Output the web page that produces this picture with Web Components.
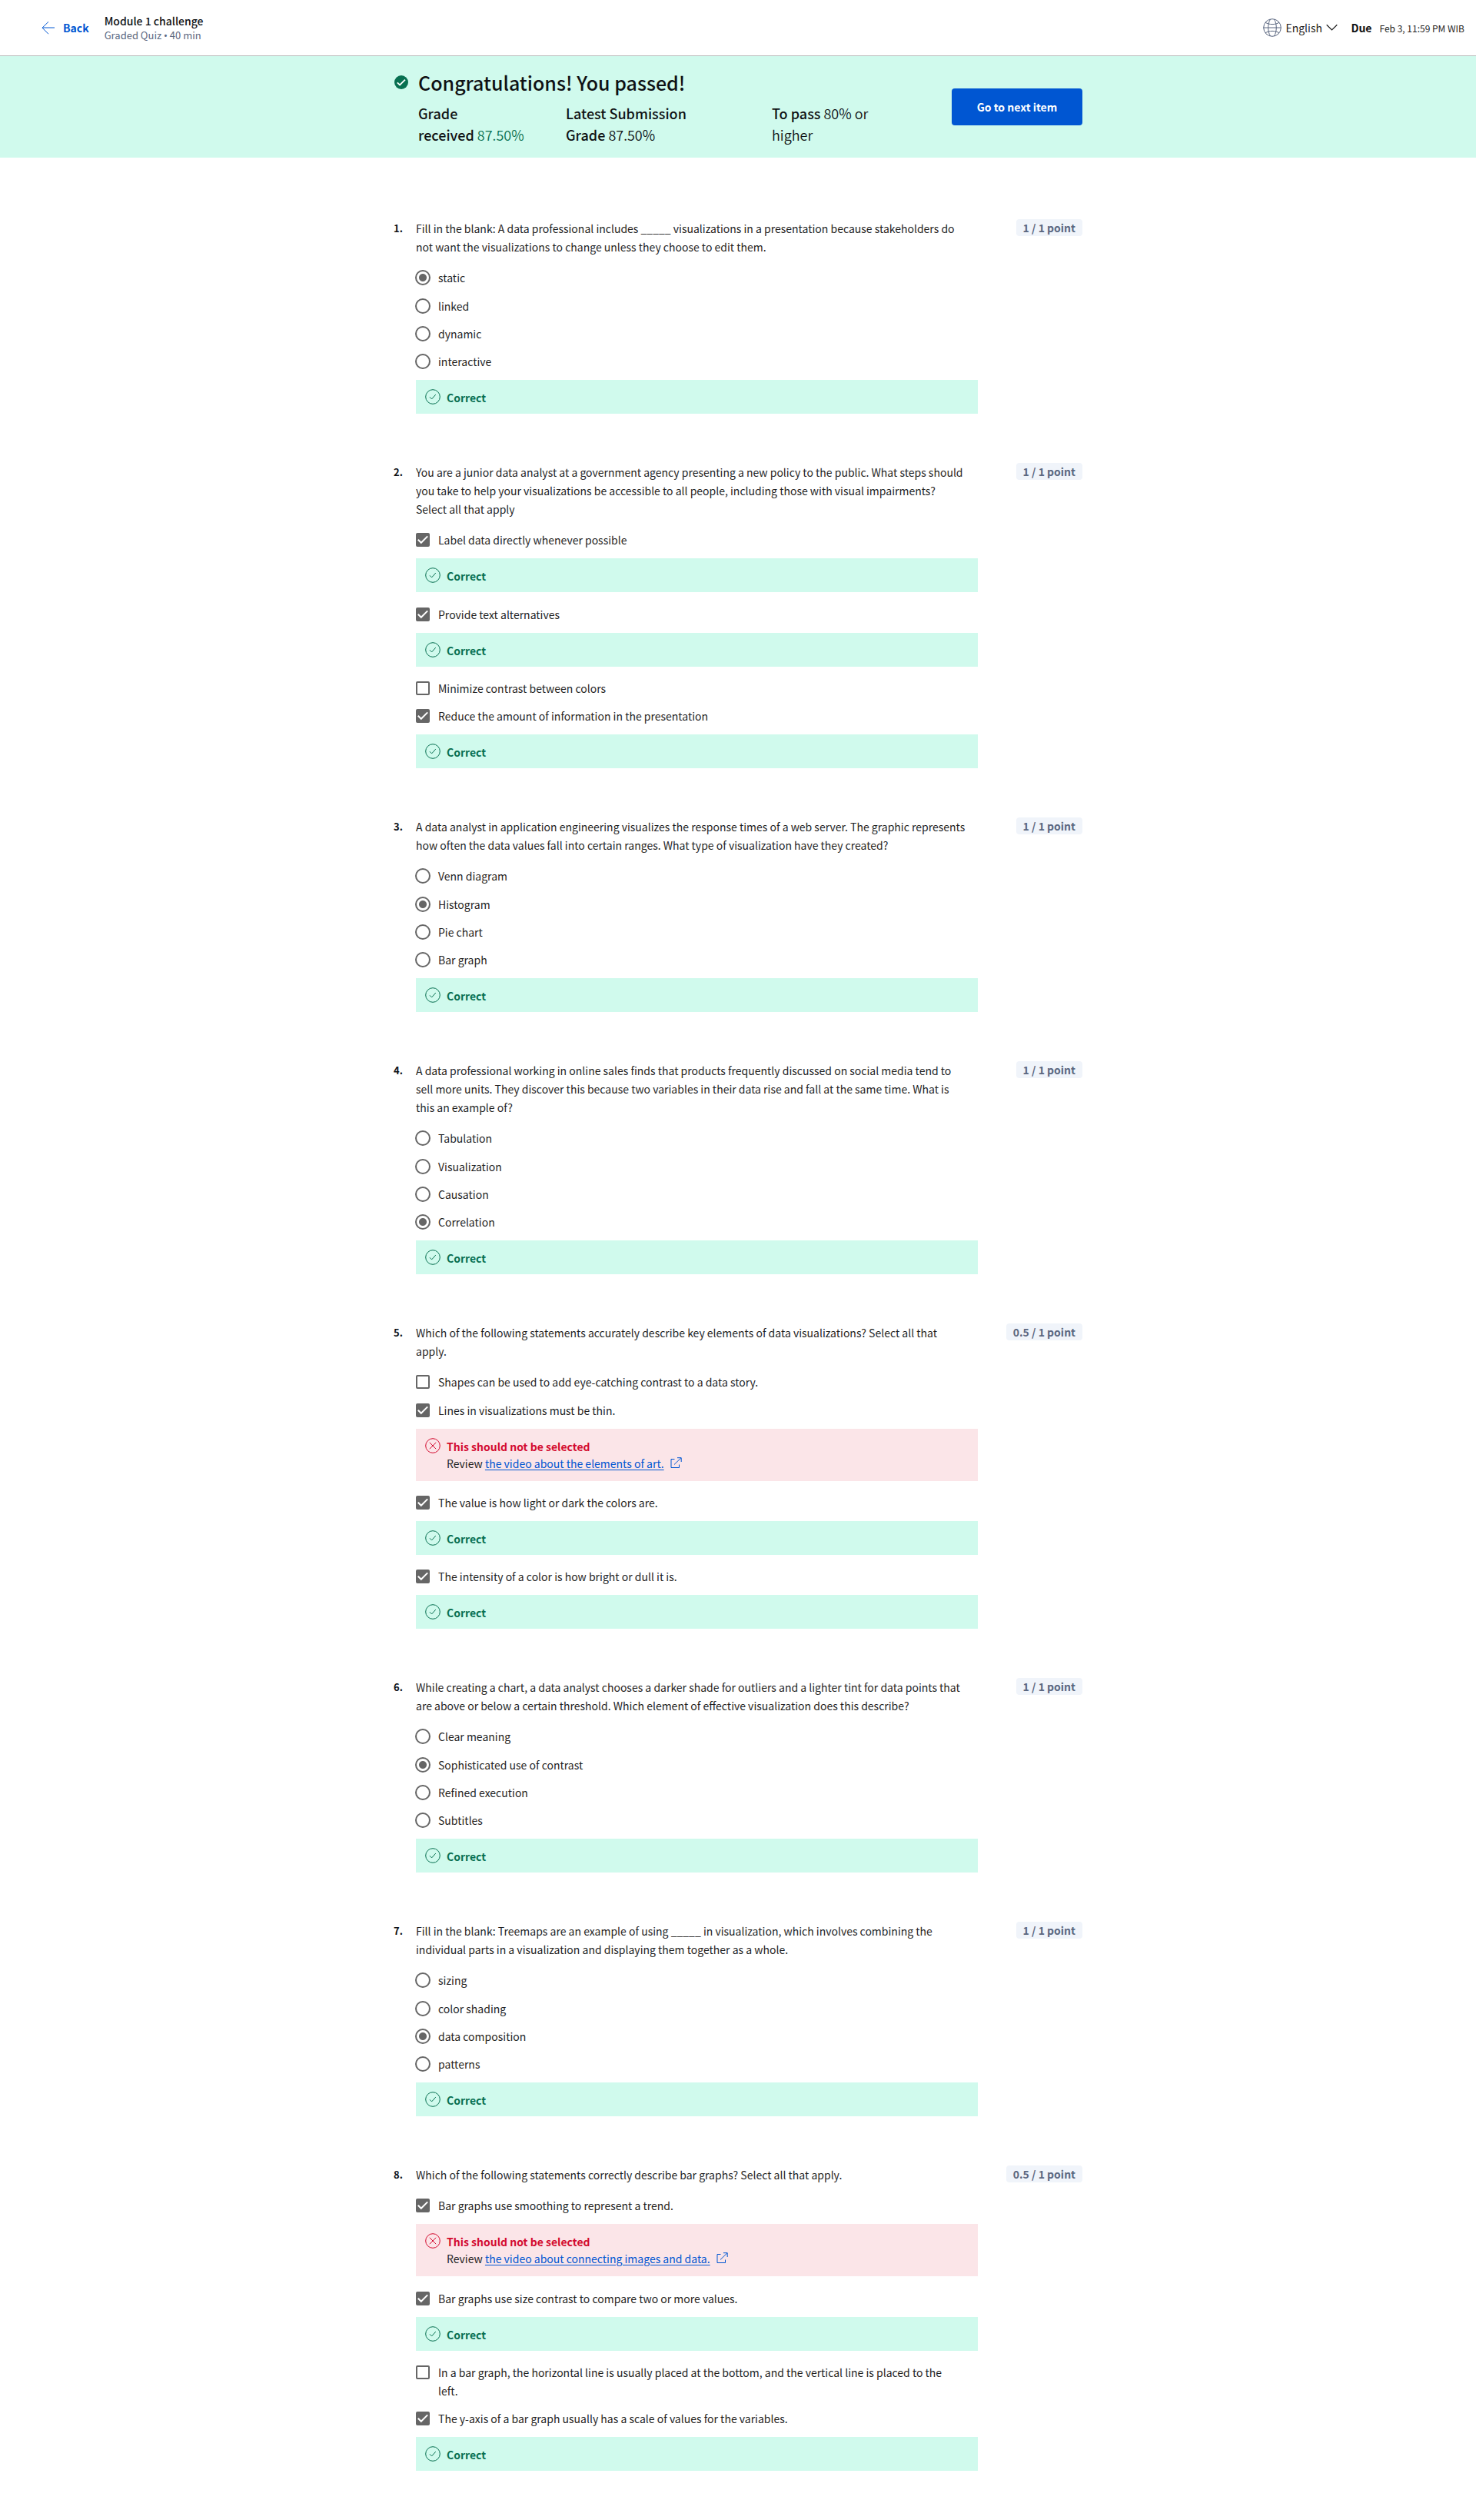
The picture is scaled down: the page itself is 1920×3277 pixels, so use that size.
<!DOCTYPE html>
<html lang="en">
<head>
<meta charset="utf-8">
<title>Module 1 challenge</title>
<style>
  body {
    margin: 0;
    background: #fff;
    color: #1f1f1f;
    font: 14px/24px "Noto Sans CJK SC", "Noto Sans", sans-serif;
  }
  .dot { font-family: "Noto Sans", sans-serif; }
</style>
</head>
<body>
<course-header>
  <span slot="title">Module 1 challenge</span>
  <span slot="meta">Graded Quiz <span class="dot">•</span> 40 min</span>
  <span slot="due">Feb 3, 11:59 PM WIB</span>
</course-header>
<result-banner>
  <span slot="heading">Congratulations! You passed!</span>
</result-banner>
<quiz-list></quiz-list>

<script>
const define = (name, html, setup) => {
  const template = document.createElement('template');
  template.innerHTML = html;
  customElements.define(name, class extends HTMLElement {
    connectedCallback() {
      if (this.shadowRoot) return;
      this.attachShadow({ mode: 'open' }).append(template.content.cloneNode(true));
      if (setup) setup(this, this.shadowRoot);
    }
  });
};

define('course-header', `
  <style>
    :host { display: block; border-bottom: 1px solid #bbb; }
    header { display: flex; align-items: center; height: 72px; padding: 0 15px 0 53px; }
    a { display: flex; align-items: center; gap: 10px; color: #0056d2; font-weight: 700; text-decoration: none; }
    svg { display: block; flex: none; fill: none; }
    .titles { flex: 1; margin-left: 20px; }
    h1 { margin: 0; font-size: 14px; line-height: 20px; font-weight: 500; color: #0f1114; }
    p { margin: 0; font-size: 13px; line-height: 18px; color: #5b6780; }
    .lang { display: flex; align-items: center; gap: 5px; }
    select { appearance: none; border: 0; margin: 0; padding: 0 20px 0 0; background: none; color: inherit; font: inherit; line-height: 24px; }
    .chevron { margin-left: -20px; pointer-events: none; }
    .due { display: flex; align-items: baseline; gap: 10px; margin-left: 17px; }
    .due b { font-weight: 700; color: #0f1114; }
    .due span { font-size: 12px; }
  </style>
  <header>
    <a href="#"><svg width="19" height="18" viewBox="0 0 19 18" stroke="#0056d2"><path d="M10 1.3 2 9.2l8 8M2 9h16"/></svg>Back</a>
    <div class="titles"><h1><slot name="title"></slot></h1><p><slot name="meta"></slot></p></div>
    <div class="lang">
      <svg width="24" height="24" viewBox="0 0 24 24" stroke="#5b6780"><circle cx="12" cy="12" r="11.3"/><path d="M.7 12h22.6M3 5.2c5 3.2 13 3.2 18 0M3 18.8c5-3.2 13-3.2 18 0M9.500 1C5.800 7 5.800 17 9.500 23M14.500 1c3.700 6 3.700 16 0 22"/></svg>
      <select aria-label="Language"><option>English</option></select>
      <svg class="chevron" width="15" height="10" viewBox="0 0 15 10" stroke="#1f1f1f" stroke-width="1.2"><path d="M.7 1.300 7.500 8l6.800-6.700"/></svg>
    </div>
    <div class="due"><b>Due</b><span><slot name="due"></slot></span></div>
  </header>`);

define('result-banner', `
  <style>
    :host { display: block; background: #d0faed; color: #0f1114; }
    section { box-sizing: border-box; max-width: 896px; margin: 0 auto; padding: 16px 0; display: grid; grid-template-columns: 32px 1fr 170px; align-items: center; }
    .icon { align-self: start; margin-top: 8px; }
    svg { display: block; }
    h2 { margin: 0; font-size: 25px; line-height: 36px; font-weight: 500; }
    .grades { display: grid; grid-template-columns: 168px 244px 140px; column-gap: 24px; margin-top: 8px; font-size: 18px; line-height: 28px; font-weight: 350; }
    p { margin: 0; }
    b { font-weight: 500; }
    .pass { color: #087051; }
    button { height: 48px; border: 0; border-radius: 4px; background: #0056d2; color: #fff; font: inherit; font-weight: 700; width: 100%; }
  </style>
  <section>
    <div class="icon"><svg width="20" height="20" viewBox="0 0 20 20" fill="none"><circle cx="10" cy="10" r="9" fill="#087051"/><path d="m4.800 10.300 3.300 3.200 6.900-6.800" stroke="#fff" stroke-width="1.800"/></svg></div>
    <div>
      <h2><slot name="heading"></slot></h2>
      <div class="grades">
        <p><b>Grade received</b>&nbsp;<span class="pass">87.50%</span></p>
        <p><b>Latest Submission Grade</b>&nbsp;<span>87.50%</span></p>
        <p><b>To pass</b> 80% or higher</p>
      </div>
    </div>
    <button type="button">Go to next item</button>
  </section>`);

define('points-badge', `
  <style>
    :host { display: block; padding: 0 9px; border-radius: 4px; background: #f0f4fa; color: #5b6780; font-weight: 700; line-height: 22px; white-space: nowrap; }
  </style><slot></slot>`);

define('answer-feedback', `
  <style>
    :host { display: block; margin-bottom: 16px; background: #d0faed; color: #087051; }
    :host([kind="wrong"]) { background: #fbe5e8; color: #d30b2f; }
    div { display: flex; gap: 8px; padding: 12px 12px 10px; line-height: 22px; }
    :host([kind="wrong"]) div { padding-bottom: 12px; }
    svg { display: block; flex: none; fill: none; stroke: currentColor; }
    section { line-height: 22px; }
    b { display: block; font-weight: 700; }
    .x, :host([kind="wrong"]) .ok { display: none; }
    :host([kind="wrong"]) .x { display: block; }
  </style>
  <div>
    <svg width="20" height="20" viewBox="0 0 20 20"><circle cx="10" cy="10" r="9.300"/><path class="ok" d="m6 10.300 2.600 2.600 5.200-5.800"/><path class="x" d="m5.800 5.800 8.400 8.400m0-8.400-8.400 8.400"/></svg>
    <section><b></b><slot></slot></section>
  </div>`, (host, root) => {
  root.querySelector('b').textContent = host.getAttribute('kind') === 'wrong' ? 'This should not be selected' : 'Correct';
});

define('review-link', `
  <style>
    :host { display: block; color: #1f1f1f; }
    a { color: #0056d2; text-underline-offset: 2px; }
    svg { display: inline-block; vertical-align: -1px; margin-left: 8px; fill: none; stroke: #0056d2; }
  </style>Review <a href="#"><slot></slot></a><svg width="15" height="15" viewBox="0 0 15 15"><path d="M5.500 2.500H1v11h10.500V9.500M5 9.500 14 .8M9 .700h5.200V6"/></svg>`);

define('quiz-question', `
  <style>
    :host { display: grid; grid-template-columns: 29px minmax(0, 1fr) 136px; align-items: start; }
    .number { font-size: 13px; font-weight: 700; color: #0f1114; }
    .prompt { margin: 0 0 16px; padding-right: 14px; }
    ul { margin: 0; padding: 0; list-style: none; }
    li:first-child { padding-bottom: 1px; }
    li:last-child answer-feedback { margin-bottom: 0; }
    label { display: grid; grid-template-columns: 20px 1fr; column-gap: 10px; margin: 0 0 12px -1px; padding-right: 24px; }
    .box { display: grid; width: 20px; height: 24px; place-items: center; }
    .box > * { grid-area: 1 / 1; }
    input { appearance: none; box-sizing: border-box; margin: 0; border: 2px solid #666; background: #fff; }
    input[type="radio"] { width: 20px; height: 20px; border-radius: 50%; }
    input[type="radio"]:checked { background: radial-gradient(circle, #666 4.500px, #fff 5.500px); }
    input[type="checkbox"] { width: 18px; height: 18px; border-radius: 2px; }
    input[type="checkbox"]:checked { background: #666; }
    svg { z-index: 1; fill: none; stroke: #fff; stroke-width: 2; pointer-events: none; }
    input:not(:checked) + svg { display: none; }
    points-badge { justify-self: end; }
  </style>
  <div class="number"></div>
  <div role="group" aria-labelledby="prompt"><p class="prompt" id="prompt"></p><ul></ul></div>
  <points-badge></points-badge>`);

// Option marks: "*" chosen, "+" chosen with "Correct" below, "!" chosen but wrong; "=" shows "Correct" below an option that is not chosen.
const questions = [
  ['radio', '1 / 1 point', 'Fill in the blank: A data professional includes _____ visualizations in a presentation because stakeholders do not want the visualizations to change unless they choose to edit them.',
    ['*', 'static'], ['', 'linked'], ['', 'dynamic'], ['=', 'interactive']],
  ['checkbox', '1 / 1 point', 'You are a junior data analyst at a government agency presenting a new policy to the public. What steps should you take to help your visualizations be accessible to all people, including those with visual impairments? Select all that apply',
    ['+', 'Label data directly whenever possible'], ['+', 'Provide text alternatives'], ['', 'Minimize contrast between colors'], ['+', 'Reduce the amount of information in the presentation']],
  ['radio', '1 / 1 point', 'A data analyst in application engineering visualizes the response times of a web server. The graphic represents how often the data values fall into certain ranges. What type of visualization have they created?',
    ['', 'Venn diagram'], ['*', 'Histogram'], ['', 'Pie chart'], ['=', 'Bar graph']],
  ['radio', '1 / 1 point', 'A data professional working in online sales finds that products frequently discussed on social media tend to sell more units. They discover this because two variables in their data rise and fall at the same time. What is this an example of?',
    ['', 'Tabulation'], ['', 'Visualization'], ['', 'Causation'], ['+', 'Correlation']],
  ['checkbox', '0.5 / 1 point', 'Which of the following statements accurately describe key elements of data visualizations? Select all that apply.',
    ['', 'Shapes can be used to add eye-catching contrast to a data story.'], ['!', 'Lines in visualizations must be thin.', 'the video about the elements of art.'], ['+', 'The value is how light or dark the colors are.'], ['+', 'The intensity of a color is how bright or dull it is.']],
  ['radio', '1 / 1 point', 'While creating a chart, a data analyst chooses a darker shade for outliers and a lighter tint for data points that are above or below a certain threshold. Which element of effective visualization does this describe?',
    ['', 'Clear meaning'], ['*', 'Sophisticated use of contrast'], ['', 'Refined execution'], ['=', 'Subtitles']],
  ['radio', '1 / 1 point', 'Fill in the blank: Treemaps are an example of using _____ in visualization, which involves combining the individual parts in a visualization and displaying them together as a whole.',
    ['', 'sizing'], ['', 'color shading'], ['*', 'data composition'], ['=', 'patterns']],
  ['checkbox', '0.5 / 1 point', 'Which of the following statements correctly describe bar graphs? Select all that apply.',
    ['!', 'Bar graphs use smoothing to represent a trend.', 'the video about connecting images and data.'], ['+', 'Bar graphs use size contrast to compare two or more values.'], ['', 'In a bar graph, the horizontal line is usually placed at the bottom, and the vertical line is placed to the left.'], ['+', 'The y-axis of a bar graph usually has a scale of values for the variables.']]
];

define('quiz-list', `
  <style>
    :host { display: block; }
    main { display: flex; flex-direction: column; gap: 64px; max-width: 896px; margin: 0 auto; padding: 80px 0 64px; }
  </style><main></main>`, (host, root) => {
  const main = root.querySelector('main');
  questions.forEach(([type, points, prompt, ...options], index) => {
    const question = document.createElement('quiz-question');
    main.append(question);
    const q = question.shadowRoot;
    q.querySelector('.number').textContent = `${index + 1}.`;
    q.querySelector('.prompt').textContent = prompt;
    q.querySelector('points-badge').textContent = points;
    q.querySelector('ul').innerHTML = options.map(([mark, text, review]) => `
      <li><label><span class="box"><input type="${type}" name="answer"${'*+!'.includes(mark) && mark ? ' checked' : ''}>${
        type === 'checkbox' ? '<svg width="18" height="18" viewBox="0 0 18 18"><path d="m2.800 8.800 4 4 8.400-8.400"/></svg>' : ''
      }</span><span>${text}</span></label>${
        mark === '!' ? `<answer-feedback kind="wrong"><review-link>${review}</review-link></answer-feedback>`
        : mark === '+' || mark === '=' ? '<answer-feedback></answer-feedback>' : ''
      }</li>`).join('');
  });
});
</script>
</body>
</html>
